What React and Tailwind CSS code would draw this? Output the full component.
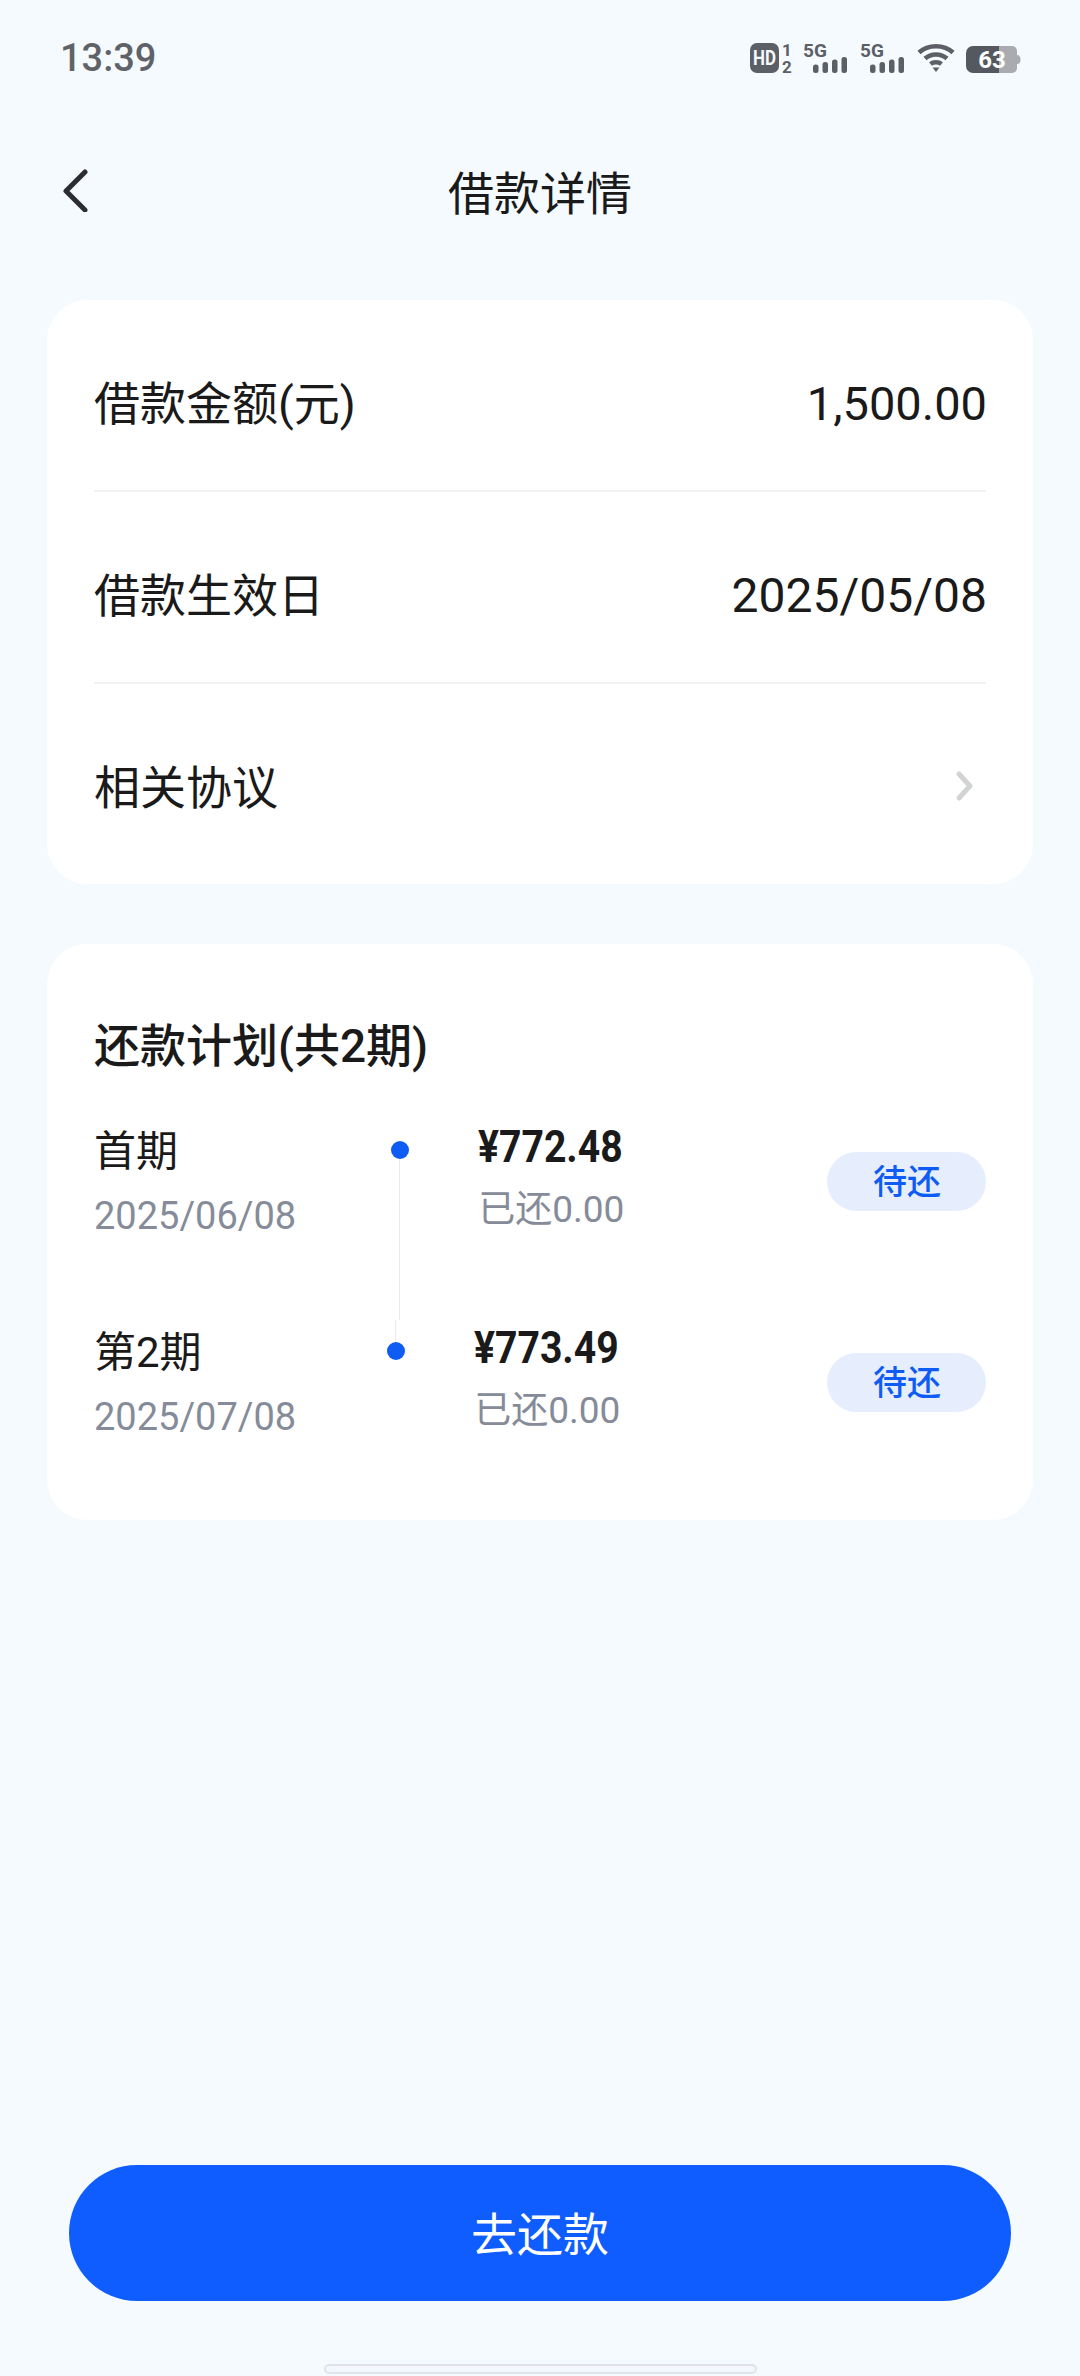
import React from "react";

const FONT = "font-['Roboto','Noto_Sans_CJK_SC',sans-serif]";

const plans = [
  { name: "首期", date: "2025/06/08", amount: "¥772.48", paid: "已还0.00", rowClass: "h-[201px]", gap: "ml-[95px]", line: true },
  { name: "第2期", date: "2025/07/08", amount: "¥773.49", paid: "已还0.00", rowClass: "", gap: "ml-[91px]", line: false },
];

// Status bar icons
const HdIcon = () => (
  <svg className="overflow-visible" width="44" height="30" viewBox="0 0 44 30">
    <rect x="0" y="0" width="29" height="30" rx="7" fill="#5c5f66" />
    <text x="14.5" y="22" textAnchor="middle" fontSize="20" fontWeight="700" fontFamily="Roboto" fill="#f5faff" textLength="23" lengthAdjust="spacingAndGlyphs">HD</text>
    <text x="37" y="13" textAnchor="middle" fontSize="17" fontWeight="700" fontFamily="Roboto" fill="#5c5f66">1</text>
    <text x="37" y="30" textAnchor="middle" fontSize="17" fontWeight="700" fontFamily="Roboto" fill="#5c5f66">2</text>
  </svg>
);

const SignalIcon = () => (
  <svg className="overflow-visible" width="44" height="30" viewBox="0 0 44 30">
    <text x="0" y="14" fontSize="19" fontWeight="700" fontFamily="Roboto" fill="#5c5f66">5G</text>
    <rect x="10" y="21.500" width="5.500" height="8.500" rx="2.500" fill="#5c5f66" />
    <rect x="19.500" y="19" width="5.500" height="11" rx="2.500" fill="#5c5f66" />
    <rect x="29" y="16.500" width="5.500" height="13.500" rx="2.500" fill="#5c5f66" />
    <rect x="38.500" y="14" width="5.500" height="16" rx="2.500" fill="#5c5f66" />
  </svg>
);

const WifiIcon = () => (
  <svg width="38" height="30" viewBox="0 0 38 30" fill="none" stroke="#5c5f66" strokeWidth="4.5">
    <path d="M2 9.500C11 1 27 1 36 9.500" />
    <path d="M8 15.500C14 10 24 10 30 15.500" />
    <path d="M13.500 21C16.500 18.500 21.500 18.500 24.500 21" />
    <path d="M15.500 24.500L22.500 24.500L19 29Z" fill="#5c5f66" stroke="none" />
  </svg>
);

const BatteryIcon = () => (
  <svg className="overflow-visible" width="54" height="27" viewBox="0 0 54 27">
    <path d="M32 0H46a5 5 0 0 1 5 5V22a5 5 0 0 1-5 5H32Z" fill="#a9abb0" />
    <path d="M51 9a3.500 4.500 0 0 1 0 9Z" fill="#a9abb0" />
    <path d="M7 0H33V27H7a7 7 0 0 1-7-7V7a7 7 0 0 1 7-7Z" fill="#55585f" />
    <text x="26" y="22" textAnchor="middle" fontSize="24" fontWeight="700" fontFamily="Roboto" fill="#ffffff">63</text>
  </svg>
);

const App = () => {
  return (
    <div className={`${FONT} relative flex h-[2376px] w-[1080px] flex-col overflow-hidden bg-[#f5faff] text-[#1a1a1a]`}>
      {/* Status bar */}
      <div className="flex h-[116px] items-start justify-between pl-[60px] pr-[60px] pt-[34px]">
        <span className="text-[38px] font-medium leading-[48px] text-[#5f6368]">13:39</span>
        <div className="mt-[9px] flex items-start">
          <HdIcon />
          <div className="ml-[9px]"><SignalIcon /></div>
          <div className="ml-[13px]"><SignalIcon /></div>
          <div className="ml-[13px]"><WifiIcon /></div>
          <div className="ml-[11px] mt-[3px]"><BatteryIcon /></div>
        </div>
      </div>

      {/* Nav */}
      <div className="relative flex h-[184px] items-start justify-center pt-[47px]">
        <svg className="absolute left-[60px] top-[52px]" width="30" height="44" viewBox="0 0 30 44" fill="none" stroke="#2b2d30" strokeWidth="5" strokeLinecap="round" strokeLinejoin="round">
          <path d="M25 4L6 23L25 42" />
        </svg>
        <h1 className="text-[46px] font-normal leading-[62px]">借款详情</h1>
      </div>

      {/* Loan info */}
      <div className="mx-[47px] rounded-[40px] bg-white px-[47px]">
        <div className="flex h-[192px] items-center justify-between border-b-2 border-[#eff1f4] pt-[17px]">
          <span className="text-[46px] leading-[60px]">借款金额(元)</span>
          <span className="-mr-px text-[47px] leading-[60px]">1,500.00</span>
        </div>
        <div className="flex h-[192px] items-center justify-between border-b-2 border-[#eff1f4] pt-[17px]">
          <span className="text-[46px] leading-[60px]">借款生效日</span>
          <span className="-mr-px text-[48px] leading-[60px]">2025/05/08</span>
        </div>
        <div className="flex h-[200px] items-center justify-between pt-[7px]">
          <span className="text-[46px] leading-[60px]">相关协议</span>
          <svg className="mr-[11px] -translate-y-[2px]" width="20" height="32" viewBox="0 0 20 32" fill="none" stroke="#d2d3d5" strokeWidth="5" strokeLinecap="round" strokeLinejoin="round">
            <path d="M4 4L15 16L4 28" />
          </svg>
        </div>
      </div>

      {/* Repayment plan */}
      <div className="mx-[47px] mt-[60px] rounded-[40px] bg-white px-[47px] pb-[78px] pt-[72px]">
        <h2 className="text-[46px] font-medium leading-[60px]">还款计划(共2期)</h2>
        <div className="mt-[46px]">
          {plans.map((plan) => (
            <div key={plan.date} className={`flex items-start ${plan.rowClass}`}>
              <div className="pt-px">
                <div className="text-[42px] leading-[58px]">{plan.name}</div>
                <div className="mt-[10px] text-[38px] leading-[50px] text-[#868b99]">{plan.date}</div>
              </div>
              <div className={`relative mt-[19px] h-[18px] w-[18px] shrink-0 rounded-full bg-[#0f5cf5] ${plan.gap}`}>
                {plan.line && (
                  <>
                    <div className="absolute left-[8px] top-[18px] h-[161px] w-px bg-[#e9ebef]" />
                    <div className="absolute left-[4px] top-[179px] h-[23px] w-px bg-[#e9ebef]" />
                  </>
                )}
              </div>
              <div className="ml-[69px]">
                <div className="origin-left scale-x-[0.87] text-[45px] font-bold leading-[50px]">{plan.amount}</div>
                <div className="mt-[13px] text-[37px] leading-[50px] text-[#868b99]">{plan.paid}</div>
              </div>
              <div className="ml-auto mt-[30px] flex h-[59px] w-[159px] items-center justify-center rounded-full bg-[#e6eefd] pl-px pt-[2px] text-[34px] font-medium text-[#0f5cf5]">
                待还
              </div>
            </div>
          ))}
        </div>
      </div>

      <div className="flex-1" />

      {/* Bottom action */}
      <button className="mx-[69px] h-[136px] rounded-full bg-[#0f5cff] pt-[5px] text-[46px] text-white">去还款</button>
      <div className="mx-auto mb-[2px] mt-[63px] h-[10px] w-[433px] rounded-full border-2 border-[#e0e4ea] bg-[#f3f6fb]" />
    </div>
  );
};

export default App;
